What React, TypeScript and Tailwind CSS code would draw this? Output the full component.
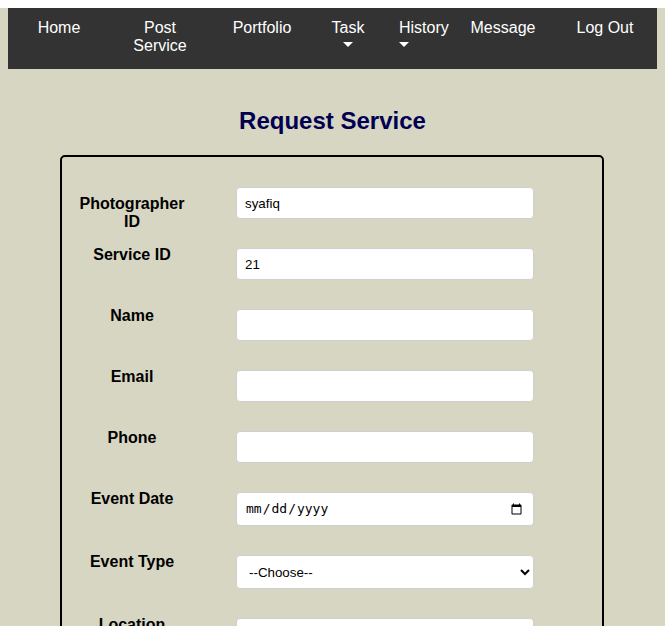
const navFont = { fontFamily: "'Liberation Sans', Arial, sans-serif" };

function Caret() {
  return (
    <span className="inline-block w-0 h-0 border-l-[5px] border-r-[5px] border-t-[5px] border-l-transparent border-r-transparent border-t-white" />
  );
}

function Nav() {
  return (
    <nav className="mx-2 mt-2 h-[61px] bg-[#333333] flex text-white text-[16px] leading-[18px] pt-[11px]">
      <a className="w-[102px] text-center">Home</a>
      <a className="w-[100px] text-center">
        <span className="block w-[60px] mx-auto">Post Service</span>
      </a>
      <a className="w-[104px] text-center">Portfolio</a>
      <a className="w-[68px] text-center">
        <div>Task</div>
        <div className="flex justify-center mt-[5px]">
          <Caret />
        </div>
      </a>
      <a className="w-[84px] pl-[17px]">
        <div>History</div>
        <div className="flex mt-[5px]">
          <Caret />
        </div>
      </a>
      <a className="w-[74px] text-center">Message</a>
      <a className="w-[14px]" />
      <a className="w-[102px] text-center">Log Out</a>
    </nav>
  );
}

const inputCls =
  "w-[298px] bg-white border border-[#cfcfcf] rounded-[4px] px-2 text-[13.33px] text-black outline-none";

type Row = { label: string; h: string; labelMt: string; kind: "text" | "date" | "select"; value?: string };

const rows: Row[] = [
  { label: "Photographer ID", h: "h-[61px]", labelMt: "mt-[8px]", kind: "text", value: "syafiq" },
  { label: "Service ID", h: "h-[61px]", labelMt: "-mt-[2px]", kind: "text", value: "21" },
  { label: "Name", h: "h-[61px]", labelMt: "-mt-[2px]", kind: "text" },
  { label: "Email", h: "h-[61px]", labelMt: "-mt-[2px]", kind: "text" },
  { label: "Phone", h: "h-[61px]", labelMt: "-mt-[2px]", kind: "text" },
  { label: "Event Date", h: "h-[63px]", labelMt: "-mt-[2px]", kind: "date" },
  { label: "Event Type", h: "h-[63px]", labelMt: "-mt-[2px]", kind: "select" },
  { label: "Location", h: "h-[61px]", labelMt: "-mt-[2px]", kind: "text" },
  { label: "Description", h: "h-[61px]", labelMt: "-mt-[2px]", kind: "text" },
];

function Field({ row }: { row: Row }) {
  if (row.kind === "date") {
    return (
      <input
        type="date"
        className={`${inputCls} h-[34px] pl-[8px]`}
        style={{ fontFamily: "'DejaVu Sans Mono', monospace", fontSize: 13 }}
      />
    );
  }
  if (row.kind === "select") {
    return (
      <select className={`${inputCls} h-[34px] pl-[8px]`} defaultValue="">
        <option value="">--Choose--</option>
        <option>Wedding</option>
        <option>Birthday</option>
        <option>Graduation</option>
      </select>
    );
  }
  return <input type="text" defaultValue={row.value} className={`${inputCls} h-[32px]`} />;
}

export default function App() {
  return (
    <div className="min-h-screen bg-[#d7d6c3] pb-10" style={navFont}>
      <Nav />
      <h2 className="mt-[38px] mb-[20px] text-center text-[24px] leading-[28px] font-bold text-[#000050]">
        Request Service
      </h2>
      <form className="w-[544px] ml-[60px] border-2 border-black rounded-[5px] pt-[30px] pb-6">
        {rows.map((row) => (
          <div key={row.label} className={`flex items-start ${row.h}`}>
            <label
              className={`w-[140px] px-[10px] text-center font-bold text-[16px] leading-[18px] text-black ${row.labelMt}`}
            >
              {row.label}
            </label>
            <div className="ml-[34px]">
              <Field row={row} />
            </div>
          </div>
        ))}
        <div className="flex justify-center">
          <button type="button" className="bg-[#333333] text-white px-6 py-2 rounded-[4px]">
            Submit
          </button>
        </div>
      </form>
    </div>
  );
}
